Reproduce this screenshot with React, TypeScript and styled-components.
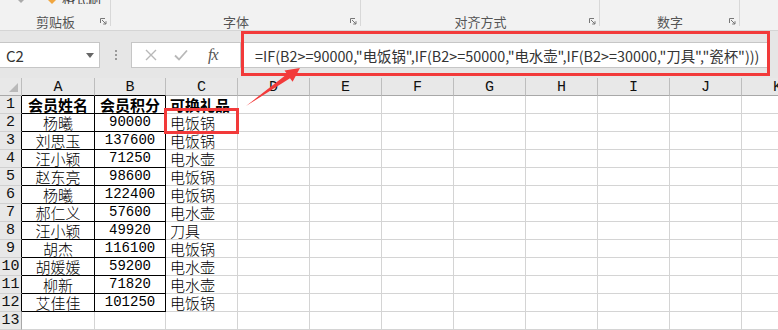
import styled, { createGlobalStyle } from "styled-components";

const GlobalStyle = createGlobalStyle`
  html, body {
    margin: 0;
    padding: 0;
  }
  body {
    width: 778px;
    height: 330px;
    overflow: hidden;
    background: #ffffff;
    font-family: "Noto Sans CJK SC", "Noto Sans", sans-serif;
  }
`;

const Screen = styled.div`
  position: relative;
  width: 778px;
  height: 330px;
  overflow: hidden;
  display: flex;
  flex-direction: column;
`;

/* ---------- ribbon ---------- */

const Ribbon = styled.div`
  flex: none;
  display: flex;
  height: 31px;
  box-sizing: border-box;
  background: #f2f2f2;
  border-bottom: 1px solid #d5d5d5;
  overflow: hidden;
`;

const RibbonGroup = styled.div<{ $w: number; $last?: boolean }>`
  position: relative;
  flex: none;
  width: ${(p) => p.$w}px;
  height: 30px;
  display: flex;
  flex-direction: column;
  justify-content: space-between;
  align-items: center;
  &::after {
    content: "";
    display: ${(p) => (p.$last ? "none" : "block")};
    position: absolute;
    right: 0;
    top: 0;
    width: 1px;
    height: 26px;
    background: #d8d8d8;
  }
`;

const PartialRow = styled.div`
  align-self: stretch;
  height: 4px;
  display: flex;
  align-items: flex-end;
  padding-left: 17px;
  font-size: 13px;
  line-height: 13px;
  color: #444;
  overflow: hidden;
`;

const PartialText = styled.span`
  margin-left: 6px;
  margin-bottom: -1px;
`;

const GroupLabel = styled.div`
  font-size: 13px;
  line-height: 16px;
  color: #555;
  padding-bottom: 0px;
`;

const Launcher = styled.svg`
  position: absolute;
  right: 4px;
  bottom: 5px;
`;

const LauncherIcon = () => (
  <Launcher width="7" height="7" viewBox="0 0 7 7">
    <path d="M0.5 5V0.5H5" fill="none" stroke="#777" strokeWidth="1" />
    <path d="M2 2L6 6M6 3.2V6H3.2" fill="none" stroke="#777" strokeWidth="1" />
  </Launcher>
);

/* ---------- formula bar ---------- */

const FormulaBar = styled.div`
  flex: none;
  height: 47px;
  box-sizing: border-box;
  background: #e6e6e6;
  display: flex;
  align-items: flex-start;
  padding-top: 11px;
`;

const NameBox = styled.div`
  flex: none;
  width: 100px;
  height: 26px;
  box-sizing: border-box;
  background: #fff;
  border: 1px solid #c6c6c6;
  border-left: none;
  display: flex;
  align-items: center;
  justify-content: space-between;
  padding: 0 5px 0 6px;
  font-size: 15px;
  color: #333;
`;

const Caret = styled.span`
  width: 0;
  height: 0;
  border-left: 4px solid transparent;
  border-right: 4px solid transparent;
  border-top: 5px solid #666;
`;

const Grip = styled.div`
  flex: none;
  width: 31px;
  height: 26px;
  display: flex;
  flex-direction: column;
  align-items: center;
  justify-content: center;
  gap: 2px;
`;

const GripDot = styled.span`
  width: 2px;
  height: 2px;
  background: #9a9a9a;
`;

const ActionBox = styled.div`
  flex: none;
  width: 110px;
  height: 26px;
  box-sizing: border-box;
  background: #fff;
  border: 1px solid #c6c6c6;
  display: flex;
  align-items: center;
  padding-left: 13px;
  gap: 17px;
`;

const Fx = styled.span`
  font-family: "Liberation Serif", serif;
  font-style: italic;
  font-size: 16px;
  color: #555;
  margin-left: 3px;
  letter-spacing: -1px;
`;

const FormulaInput = styled.div`
  flex: none;
  width: 529px;
  height: 26px;
  box-sizing: border-box;
  background: #fff;
  border: 1px solid #c6c6c6;
  border-left: none;
  display: flex;
  align-items: center;
  padding-left: 14px;
  font-size: 14.4px;
  color: #333;
  white-space: nowrap;
`;

/* ---------- sheet ---------- */

const Sheet = styled.div`
  display: grid;
  grid-template-columns: 22px 73px 71px repeat(9, 72px);
  grid-auto-rows: 18px;
  background: #fff;
`;

const ColHead = styled.div<{ $dark?: boolean }>`
  box-sizing: border-box;
  background: #e8e8e8;
  border-right: 1px solid #bdbdbd;
  border-bottom: 1px solid ${(p) => (p.$dark ? "#000" : "#a8a8a8")};
  display: flex;
  align-items: center;
  justify-content: center;
  font-family: "Liberation Mono", monospace;
  font-size: 15px;
  color: #111;
  padding-top: 2px;
`;

const Corner = styled(ColHead)`
  position: relative;
  &::after {
    content: "";
    position: absolute;
    right: 3px;
    bottom: 3px;
    border-left: 9px solid transparent;
    border-bottom: 9px solid #b9b9b9;
  }
`;

const RowHead = styled.div<{ $dark?: boolean }>`
  box-sizing: border-box;
  background: #e8e8e8;
  border-right: 1px solid ${(p) => (p.$dark ? "#000" : "#a8a8a8")};
  border-bottom: 1px solid #d0d0d0;
  display: flex;
  align-items: flex-end;
  justify-content: center;
  font-family: "Liberation Mono", monospace;
  font-size: 15px;
  line-height: 16px;
  color: #111;
`;

const Cell = styled.div<{
  $boxed?: boolean;
  $left?: boolean;
  $bold?: boolean;
  $num?: boolean;
}>`
  box-sizing: border-box;
  border-right: 1px solid ${(p) => (p.$boxed ? "#000" : "#d4d4d4")};
  border-bottom: 1px solid ${(p) => (p.$boxed ? "#000" : "#d4d4d4")};
  display: flex;
  align-items: flex-end;
  justify-content: ${(p) => (p.$left ? "flex-start" : "center")};
  padding-left: ${(p) => (p.$left ? "4px" : "0")};
  font-family: ${(p) =>
    p.$num
      ? '"Liberation Mono", monospace'
      : '"Noto Sans CJK SC", "Noto Sans", sans-serif'};
  font-size: ${(p) => (p.$num ? "14px" : "15px")};
  font-weight: ${(p) => (p.$bold ? 700 : 300)};
  line-height: 17px;
  color: #000;
  white-space: nowrap;
  overflow: hidden;
`;

/* ---------- annotations ---------- */

const RedBox = styled.div<{ $x: number; $y: number; $w: number; $h: number }>`
  position: absolute;
  left: ${(p) => p.$x}px;
  top: ${(p) => p.$y}px;
  width: ${(p) => p.$w}px;
  height: ${(p) => p.$h}px;
  box-sizing: border-box;
  border: 3px solid #f23a3a;
  pointer-events: none;
`;

const Overlay = styled.svg`
  position: absolute;
  left: 0;
  top: 0;
  pointer-events: none;
`;

const rows: [string, string, string][] = [
  ["杨曦", "90000", "电饭锅"],
  ["刘思玉", "137600", "电饭锅"],
  ["汪小颖", "71250", "电水壶"],
  ["赵东亮", "98600", "电饭锅"],
  ["杨曦", "122400", "电饭锅"],
  ["郝仁义", "57600", "电水壶"],
  ["汪小颖", "49920", "刀具"],
  ["胡杰", "116100", "电饭锅"],
  ["胡媛媛", "59200", "电水壶"],
  ["柳新", "71820", "电水壶"],
  ["艾佳佳", "101250", "电饭锅"],
];

const letters = ["A", "B", "C", "D", "E", "F", "G", "H", "I", "J", "K"];
const emptyCols = 8;

export default function App() {
  return (
    <>
      <GlobalStyle />
      <Screen>
        <Ribbon>
          <RibbonGroup $w={111}>
            <PartialRow>
              <svg width="8" height="4" viewBox="0 0 8 4">
                <path d="M1 0L4 3L7 0Z" fill="#aaa" />
              </svg>
              <svg width="8" height="4" viewBox="0 0 8 4" style={{ marginLeft: 23 }}>
                <path d="M0 0L4 4L8 0Z" fill="#f0a640" />
              </svg>
              <PartialText>格式刷</PartialText>
            </PartialRow>
            <GroupLabel>剪贴板</GroupLabel>
            <LauncherIcon />
          </RibbonGroup>
          <RibbonGroup $w={250}>
            <span />
            <GroupLabel>字体</GroupLabel>
            <LauncherIcon />
          </RibbonGroup>
          <RibbonGroup $w={239}>
            <span />
            <GroupLabel>对齐方式</GroupLabel>
            <LauncherIcon />
          </RibbonGroup>
          <RibbonGroup $w={140}>
            <span />
            <GroupLabel>数字</GroupLabel>
            <LauncherIcon />
          </RibbonGroup>
          <RibbonGroup $w={38} $last>
            <span />
          </RibbonGroup>
        </Ribbon>

        <FormulaBar>
          <NameBox>
            C2
            <Caret />
          </NameBox>
          <Grip>
            <GripDot />
            <GripDot />
            <GripDot />
          </Grip>
          <ActionBox>
            <svg width="12" height="12" viewBox="0 0 12 12">
              <path d="M1 1L11 11M11 1L1 11" stroke="#b8b8b8" strokeWidth="1.4" />
            </svg>
            <svg width="14" height="12" viewBox="0 0 14 12">
              <path d="M1 6.5L5 10.5L13 1.5" fill="none" stroke="#b8b8b8" strokeWidth="1.8" />
            </svg>
            <Fx>fx</Fx>
          </ActionBox>
          <FormulaInput>
            =IF(B2&gt;=90000,"电饭锅",IF(B2&gt;=50000,"电水壶",IF(B2&gt;=30000,"刀具","瓷杯")))
          </FormulaInput>
        </FormulaBar>

        <Sheet>
          <Corner />
          {letters.map((l, i) => (
            <ColHead key={l} $dark={i < 2}>
              {l}
            </ColHead>
          ))}

          <RowHead $dark>1</RowHead>
          <Cell $boxed $bold>会员姓名</Cell>
          <Cell $boxed $bold>会员积分</Cell>
          <Cell $left $bold>可换礼品</Cell>
          {Array.from({ length: emptyCols }).map((_, j) => (
            <Cell key={j} />
          ))}

          {rows.map(([name, score, gift], i) => (
            <div key={i} style={{ display: "contents" }}>
              <RowHead $dark>{i + 2}</RowHead>
              <Cell $boxed>{name}</Cell>
              <Cell $boxed $num>{score}</Cell>
              <Cell $left>{gift}</Cell>
              {Array.from({ length: emptyCols }).map((_, j) => (
                <Cell key={j} />
              ))}
            </div>
          ))}

          <RowHead>13</RowHead>
          {letters.map((l) => (
            <Cell key={l} />
          ))}
        </Sheet>

        <RedBox $x={241} $y={31} $w={529} $h={45} />
        <RedBox $x={164} $y={108} $w={75} $h={26} />
        <Overlay width="778" height="330">
          <polygon
            points="246,106 290,78.2 292.6,81.8 300,68 284.5,70.4 287.1,74.1"
            fill="#f23a3a"
          />
        </Overlay>
      </Screen>
    </>
  );
}
